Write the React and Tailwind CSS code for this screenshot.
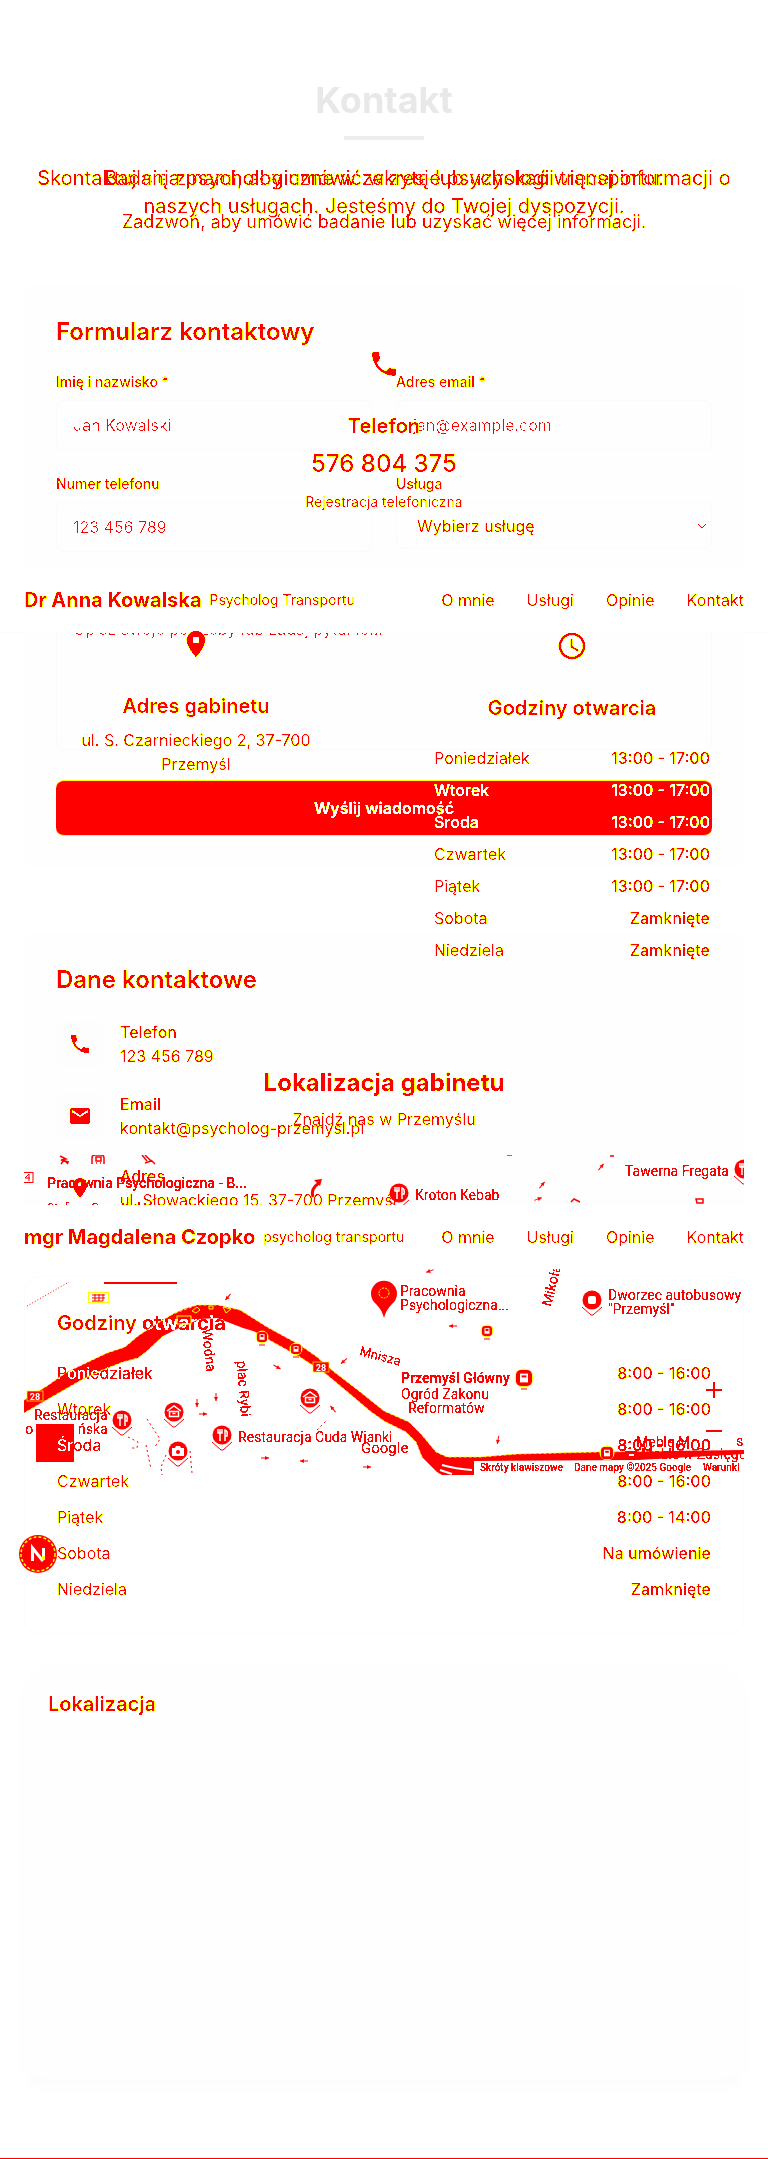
import React from "react";
import { MdPhone, MdEmail, MdLocationOn, MdAccessTime } from "react-icons/md";

function Filters() {
  return (
    <svg width="0" height="0" className="absolute" aria-hidden="true">
      <defs>
        <filter id="ink" colorInterpolationFilters="sRGB">
          <feColorMatrix type="matrix" values="0 0 0 0 1  0 0 0 1 0  0 0 0 0 0  0 0 0 1 0" />
          <feComponentTransfer>
            <feFuncG type="discrete" tableValues="1 1 1 1 1 1 1 0 0 0" />
            <feFuncA type="discrete" tableValues="0 0 1 1 1 1 1 1 1 1" />
          </feComponentTransfer>
        </filter>
        <filter id="light" colorInterpolationFilters="sRGB">
          <feColorMatrix type="matrix" values="0 0 0 0 1  0 0 0 0 1  0 0 0 1 0  0 0 0 1 0" />
          <feComponentTransfer>
            <feFuncB type="discrete" tableValues="0 0 0 0 0 1 1 1 1 1" />
            <feFuncA type="discrete" tableValues="0 0 1 1 1 1 1 1 1 1" />
          </feComponentTransfer>
        </filter>
        <filter id="crisp" colorInterpolationFilters="sRGB">
          <feComponentTransfer>
            <feFuncA type="discrete" tableValues="0 0 0 1 1 1 1 1" />
          </feComponentTransfer>
        </filter>
        <filter id="faint" colorInterpolationFilters="sRGB">
          <feComponentTransfer>
            <feFuncA type="discrete" tableValues="0 0 0.04 0.04 0.04 0.04 0.04 0.04 1 1" />
          </feComponentTransfer>
        </filter>
      </defs>
    </svg>
  );
}

function SiteHeader({ name, role }) {
  return (
    <div className="flex h-16 items-center justify-between bg-white px-6">
      <div className="flex items-center gap-2 [filter:url(#ink)]">
        <span className="text-xl font-bold">{name}</span>
        <span className="text-sm">{role}</span>
      </div>
      <nav className="flex gap-8 [filter:url(#ink)]">
        <a href="#o-mnie">O mnie</a>
        <a href="#uslugi">Usługi</a>
        <a href="#opinie">Opinie</a>
        <a href="#kontakt">Kontakt</a>
      </nav>
    </div>
  );
}

function Field({ id, label, placeholder, type }) {
  return (
    <div>
      <label htmlFor={id} className="mb-2 block text-sm font-medium [filter:url(#ink)]">{label}</label>
      <div className="rounded-lg border border-[#fafafa]">
        <input id={id} type={type} placeholder={placeholder} className="block w-full bg-transparent px-4 py-3 outline-none placeholder:text-[#f00] [filter:url(#faint)]" />
      </div>
    </div>
  );
}

function ContactItem({ icon, title, value }) {
  return (
    <div className="flex gap-4">
      <div className="flex size-12 items-center justify-center rounded-lg bg-[#fdfdfd]">
        <span className="[filter:url(#ink)]">{icon}</span>
      </div>
      <div className="[filter:url(#ink)]">
        <h3 className="font-medium">{title}</h3>
        <p>{value}</p>
      </div>
    </div>
  );
}

const formHours = [
  ["Poniedziałek", "8:00 - 16:00"],
  ["Wtorek", "8:00 - 16:00"],
  ["Środa", "8:00 - 16:00"],
  ["Czwartek", "8:00 - 16:00"],
  ["Piątek", "8:00 - 14:00"],
  ["Sobota", "Na umówienie"],
  ["Niedziela", "Zamknięte"],
];

const officeHours = [
  ["Poniedziałek", "13:00 - 17:00"],
  ["Wtorek", "13:00 - 17:00"],
  ["Środa", "13:00 - 17:00"],
  ["Czwartek", "13:00 - 17:00"],
  ["Piątek", "13:00 - 17:00"],
  ["Sobota", "Zamknięte"],
  ["Niedziela", "Zamknięte"],
];

function FormLayer() {
  return (
    <div className="col-start-1 row-start-1">
      <p className="text-center text-xl leading-7 [filter:url(#ink)]">
        Skontaktuj się z nami, aby umówić wizytę lub uzyskać więcej informacji o naszych usługach. Jesteśmy do Twojej dyspozycji.
      </p>
      <section className="mt-16 rounded-xl bg-[#fefefe] p-8">
        <h2 className="mb-6 text-2xl font-semibold [filter:url(#ink)]">Formularz kontaktowy</h2>
        <form onSubmit={(e) => e.preventDefault()}>
          <div className="grid grid-cols-2 gap-6">
            <Field id="name" type="text" label="Imię i nazwisko *" placeholder="Jan Kowalski" />
            <Field id="email" type="email" label="Adres email *" placeholder="jan@example.com" />
            <Field id="phone" type="tel" label="Numer telefonu" placeholder="123 456 789" />
            <div>
              <label htmlFor="service" className="mb-2 block text-sm font-medium [filter:url(#ink)]">Usługa</label>
              <div className="grid items-center rounded-lg border border-[#fafafa]">
                <select id="service" className="col-start-1 row-start-1 h-[45px] w-full appearance-none bg-transparent px-5 [filter:url(#ink)]">
                  <option>Wybierz usługę</option>
                </select>
                <svg viewBox="0 0 10 6" className="pointer-events-none col-start-1 row-start-1 mr-1 h-[6px] w-[10px] justify-self-end" shapeRendering="crispEdges">
                  <path d="M1 1l4 4 4-4" fill="none" stroke="#f00" />
                </svg>
              </div>
            </div>
          </div>
          <div className="mt-6">
            <label htmlFor="message" className="mb-2 block text-sm font-medium [filter:url(#ink)]">Wiadomość *</label>
            <div className="rounded-lg border border-[#fafafa]">
              <textarea id="message" rows={5} placeholder="Opisz swoje potrzeby lub zadaj pytanie..." className="block w-full resize-none bg-transparent px-4 py-3 outline-none placeholder:text-[#f00] [filter:url(#faint)]" />
            </div>
          </div>
          <button type="submit" className="mt-[30px] h-14 w-full rounded-lg border-y border-[#ff0] bg-[#f00] font-semibold">
            <span className="[filter:url(#light)]">Wyślij wiadomość</span>
          </button>
        </form>
      </section>
      <section className="mt-16 rounded-xl bg-[#fefefe] px-8 pt-8">
        <h2 className="mb-6 text-2xl font-semibold [filter:url(#ink)]">Dane kontaktowe</h2>
        <div className="grid gap-6">
          <ContactItem icon={<MdPhone size={24} />} title="Telefon" value="123 456 789" />
          <ContactItem icon={<MdEmail size={24} />} title="Email" value="kontakt@psycholog-przemysl.pl" />
          <ContactItem icon={<MdLocationOn size={24} />} title="Adres" value="ul. Słowackiego 15, 37-700 Przemyśl" />
        </div>
      </section>
      <section className="mt-16 rounded-2xl border border-[#fcfcfc] p-8">
        <h2 className="mb-6 text-xl leading-7 font-semibold">
          <span className="inline-block [filter:url(#ink)]">Godziny</span>{" "}
          <span className="inline-block [filter:url(#crisp)]">otwarcia</span>
        </h2>
        <ul className="grid gap-3">
          {formHours.map(([day, hours], i) => (
            <li key={day} className="flex justify-between">
              <span className={i === 0 || i === 2 ? "[filter:url(#crisp)]" : "[filter:url(#ink)]"}>{day}</span>
              <span className={i === 2 ? "font-medium [filter:url(#crisp)]" : "font-medium [filter:url(#ink)]"}>{hours}</span>
            </li>
          ))}
        </ul>
      </section>
      <section className="mt-8 rounded-3xl bg-[#fefefe] p-6 shadow-[0_10px_15px_rgba(0,0,0,0.015)]">
        <h2 className="text-xl leading-7 font-semibold [filter:url(#ink)]">Lokalizacja</h2>
        <div className="h-[337px]" />
      </section>
    </div>
  );
}

const arrows = [
  [577, 12, -50], [518, 30, -50], [514, 44, -20], [253, 212, 30], [320, 206, 140],
  [173, 248, 90], [192, 242, 90], [179, 259, 0], [309, 254, -130], [241, 303, 0],
  [280, 306, 180], [343, 312, 0], [429, 171, 180], [474, 285, 100], [204, 142, 130],
  [406, 116, 160],
];

function Place({ x, y, children }) {
  return (
    <g transform={`translate(${x} ${y})`}>
      <circle r="9.5" fill="#f00" />
      <path d="M-10 7L-1 15H1L10 7" fill="none" stroke="#f00" />
      {children}
    </g>
  );
}

function Fork() {
  return (
    <g stroke="#fff" strokeWidth="1.5" fill="none">
      <path d="M-4-6v4h4v-4M-2-6V6M3 6V-5q3 1 2 6h-2" />
    </g>
  );
}

function Bed() {
  return (
    <g stroke="#fff" strokeWidth="1.5" fill="none">
      <path d="M-7-1L0-6L7-1M-4.500-.5v5h9v-5zM-1.500 1.500h3" />
    </g>
  );
}

function Stop({ x, y, r }) {
  return (
    <g transform={`translate(${x} ${y})`}>
      <circle r={r + 1.5} fill="#ff0" />
      <rect x={-r} y={-r} width={2 * r} height={2 * r} rx={r * 0.6} fill="#f00" />
      <rect x={-r * 0.5} y={-r * 0.55} width={r} height={r * 1.1} fill="#fff" />
      <path d={`M${-r * 0.3} ${-r * 0.2}h${r * 0.6}`} stroke="#f00" strokeWidth="2" />
      <path d={`M-3 ${r + 3}h6`} stroke="#f00" />
    </g>
  );
}

function Badge({ x, y, text }) {
  return (
    <g transform={`translate(${x} ${y})`}>
      <rect x="-8" y="-5" width="16" height="10" fill="#f00" stroke="#ff0" strokeWidth="0.7" />
      <text y="3.500" textAnchor="middle" fontSize="9" fontWeight="700" fill="#fff">{text}</text>
    </g>
  );
}

function CityMap() {
  return (
    <div className="grid h-80 overflow-clip">
      <svg viewBox="0 0 720 320" preserveAspectRatio="xMidYMid slice" className="col-start-1 row-start-1 h-80 w-full mix-blend-difference" fill="#0ff">
        <path d="M0 245L23 231 43 217 83 198 101 192 114 181 129 171 149 159 160 154 173 150 194 150 216 155 224 160 243 172 276 190 293 202 309 216 335 236 360 256 385 267 397 279 412 297 423 302 457 302 493 299 573 297 720 295V299L614 305 450 306V320H418L413 317 398 302 392 287 382 277 360 266 346 256 326 239 302 219 276 202 256 191 229 176 219 173 193 163 176 164 157 172 139 181 123 196 114 203 99 207 76 216 59 224 0 258Z" />
        <rect x="12" y="269" width="38" height="38" />
      </svg>
      <svg viewBox="0 0 720 320" preserveAspectRatio="xMidYMid slice" className="relative col-start-1 row-start-1 h-80 w-full font-[Roboto]" fill="#f00" fontSize="14" role="img" aria-label="Mapa dojazdu">
        <path d="M0 245L23 231 43 217 83 198 101 192 114 181 129 171 149 159 173 150 194 150 216 155 224 160 243 172 276 190 293 202 309 216 335 236 360 256 385 267 397 279 412 297 423 302 457 302 493 299 573 297 640 296" fill="none" stroke="#ff0" strokeWidth="1" strokeDasharray="3 2" />
        <path d="M398 302L392 287 382 277 360 266 346 256 326 239 302 219 276 202 256 191 229 176M139 181L123 196 114 203 99 207 76 216 59 224 0 258" fill="none" stroke="#ff0" strokeWidth="1" strokeDasharray="3 2" />
        <path d="M80 128H153" stroke="#f00" strokeWidth="2" />
        <path d="M3 151L45 127" stroke="#f00" strokeDasharray="1 2" />
        <path d="M123 264L136 284 131 292M122 290l5 24M104 282l10 5 -1 6h-7M142 300l-5 12 1 8M166 296l2 22M293 275l9-9" fill="none" stroke="#f00" strokeDasharray="2 3" />
        <path d="M418 310q14 4 30 5M416 315l12 4" stroke="#fff" strokeWidth="2" fill="none" />
        <path d="M168 156l5-4 3 3-4 3zM185 151h4v3h-4zM199 152l8 2-5 4z" fill="none" stroke="#ff0" />
        <rect x="64.500" y="137.500" width="20" height="10" fill="#fff" stroke="#ff0" />
        <path d="M68 140h13M68 143h13M68 146h11M71 139v7M75 139v7M79 139v7" stroke="#f00" />
        <rect x="-4" y="17.500" width="13" height="10" fill="none" stroke="#f00" />
        <path d="M1 23h5M5 19v7M1 23l4-4" stroke="#f00" />
        <path d="M36 1l6 3-5 1 8 2M37 9l3-4 4 4M118 0l5 6M121 0l6 6-6 2M127 5l4 4" fill="none" stroke="#f00" strokeWidth="1.5" />
        <path d="M68 9V3q0-3 3-3h6q3 0 3 3v6M72 2v4h5V2zM72 8h1M76 8h1" fill="none" stroke="#f00" strokeWidth="1.5" />
        <path d="M289 42q-3-8 6-14" fill="none" stroke="#f00" strokeWidth="3" />
        <path d="M290 25l8-1-2 7z" />
        <path d="M547 47l3-3 6 3M672 44h7v4h-6zM483 0h5M586 1h4" fill="none" stroke="#f00" strokeWidth="1.500" />
        {arrows.map(([x, y, a]) => (
          <g key={`${x}-${y}`} transform={`translate(${x} ${y}) rotate(${a})`}>
            <path d="M-4 0H4" stroke="#f00" />
            <path d="M0-2L4 0 0 2z" />
          </g>
        ))}
        <g className="[filter:url(#crisp)]">
          <text x="23" y="33" fontWeight="500">Pracownia Psychologiczna - B...</text>
          <text x="23" y="57" fontSize="12">Stefana Czarnieckiego</text>
          <text x="391" y="45">Kroton Kebab</text>
          <text x="601" y="21">Tawerna Fregata</text>
          <text x="376" y="141">Pracownia</text>
          <text x="376" y="155">Psychologiczna...</text>
          <text x="584" y="145">Dworzec autobusowy</text>
          <text x="584" y="159">"Przemyśl"</text>
          <text x="377" y="228" fontWeight="600">Przemyśl Główny</text>
          <text x="377" y="244">Ogród Zakonu</text>
          <text x="384" y="258">Reformatów</text>
          <text x="10" y="265">Restauracja</text>
          <text x="-8" y="279">Do</text>
          <text x="54" y="279">ńska</text>
          <text x="214" y="287">Restauracja Cuda Wianki</text>
          <text x="337" y="298" fontSize="15">Google</text>
          <text x="612" y="292">Meble M</text>
          <text x="712" y="291">s</text>
          <text transform="translate(178 174) rotate(84)">Wodna</text>
          <text transform="translate(213 206) rotate(86)">plac Rybi</text>
          <text transform="translate(527 152) rotate(-76)">Mikoła</text>
          <text transform="translate(335 200) rotate(15)" fontSize="13">Mnisza</text>
        </g>
        <Badge x={11} y={241} text="28" />
        <Badge x={297} y={212} text="28" />
        <rect x="153" y="161" width="14" height="8" fill="none" stroke="#ff0" />
        <Stop x={238} y={182} r={5} />
        <Stop x={272} y={194} r={5} />
        <Stop x={463} y={176} r={5} />
        <Stop x={500} y={223} r={8} />
        <Stop x={583} y={298} r={6} />
        <Place x={98} y={265}><Fork /></Place>
        <Place x={198} y={280}><Fork /></Place>
        <Place x={375} y={38}><Fork /></Place>
        <Place x={720} y={14}><Fork /></Place>
        <Place x={150} y={257}><Bed /></Place>
        <Place x={286} y={243}><Bed /></Place>
        <Place x={154} y={296}>
          <path d="M-6-3h3l1-2h4l1 2h3v8H-6z" fill="#fff" />
          <circle cy="1" r="2" fill="#f00" />
        </Place>
        <Place x={568} y={145}><rect x="-4" y="-4" width="8" height="8" rx="2" fill="#fff" /></Place>
        <path d="M360 163q-2-8-8-14a13 13 0 1 1 16 0q-6 6-8 14z" />
        <circle cx="360" cy="138" r="5" fill="none" stroke="#ff0" strokeDasharray="2 1" />
        <path d="M682 235h16M690 227v16M682 276h16" stroke="#f00" strokeWidth="2" />
        <rect x="601" y="296" width="12" height="8" fill="#f00" />
        <path d="M605 300h5" stroke="#fff" strokeWidth="2" />
        <rect x="450" y="306" width="270" height="14" fill="#fff" />
        <g className="[filter:url(#crisp)]">
          <text x="617" y="304">Meble w Zasięgu</text>
          <g fontSize="10" fontWeight="500">
            <text x="456" y="316">Skróty klawiszowe</text>
            <text x="550" y="316">Dane mapy ©2025 Google</text>
            <text x="679" y="316">Warunki</text>
          </g>
        </g>
      </svg>
    </div>
  );
}

function OfficeLayer() {
  return (
    <div className="col-start-1 row-start-1 text-center">
      <p className="text-xl leading-7 [filter:url(#ink)]">Badania psychologiczne w zakresie psychologii transportu.</p>
      <p className="mt-4 text-lg leading-7 [filter:url(#ink)]">Zadzwoń, aby umówić badanie lub uzyskać więcej informacji.</p>
      <div className="mt-24 flex flex-col items-center pb-8">
        <div className="flex h-16 items-center [filter:url(#ink)]"><MdPhone size={32} /></div>
        <div className="mt-4 flex flex-col items-center [filter:url(#ink)]">
          <h3 className="text-xl leading-7 font-semibold">Telefon</h3>
          <a href="tel:576804375" className="mt-2 text-2xl font-medium">576 804 375</a>
          <p className="mt-3 text-sm">Rejestracja telefoniczna</p>
        </div>
      </div>
      <div className="mt-8 grid grid-cols-2 gap-8">
        <div className="px-8 pt-9">
          <div className="relative z-20 flex h-16 items-center justify-center [filter:url(#ink)]"><MdLocationOn size={32} /></div>
          <h3 className="mt-4 text-xl leading-7 font-semibold [filter:url(#ink)]">Adres gabinetu</h3>
          <p className="mt-2 [filter:url(#ink)]">ul. S. Czarnieckiego 2, 37-700 Przemyśl</p>
        </div>
        <div className="px-[34px] pt-[38px]">
          <div className="flex h-16 items-center justify-center [filter:url(#ink)]"><MdAccessTime size={32} /></div>
          <h3 className="mt-4 text-xl leading-7 font-semibold [filter:url(#ink)]">Godziny otwarcia</h3>
          <ul className="mt-6 grid gap-2">
            {officeHours.map(([day, hours], i) => (
              <li key={day} className={i === 1 || i === 2 ? "flex justify-between font-medium [filter:url(#light)]" : "flex justify-between [filter:url(#ink)]"}>
                <span>{day}</span>
                <span className="font-medium">{hours}</span>
              </li>
            ))}
          </ul>
        </div>
      </div>
      <h2 className="mt-[105px] text-2xl font-bold [filter:url(#ink)]">Lokalizacja gabinetu</h2>
      <p className="mt-2 mb-6 [filter:url(#ink)]">Znajdź nas w Przemyślu</p>
      <CityMap />
    </div>
  );
}

export default function App() {
  return (
    <main className="relative overflow-clip border-b border-[#f00] bg-white px-6 pt-20 pb-[79px] font-[Inter,sans-serif] text-base text-[#f00]">
      <Filters />
      <h1 className="text-center text-4xl font-bold text-[#e8e8e8]">Kontakt</h1>
      <div className="mx-auto mt-4 h-1 w-20 bg-[#ececec]" />
      <div className="mt-6 grid grid-cols-1">
        <FormLayer />
        <OfficeLayer />
      </div>
      <header className="absolute inset-x-0 top-[568px] z-10 border-b border-[#fcfcfc]">
        <SiteHeader name="Dr Anna Kowalska" role="Psycholog Transportu" />
      </header>
      <header className="absolute inset-x-0 top-[1205px] z-10">
        <SiteHeader name="mgr Magdalena Czopko" role="psycholog transportu" />
      </header>
      <button type="button" aria-label="Narzędzia" className="absolute top-[1535px] left-[19px] z-10 size-[38px]">
        <svg viewBox="0 0 38 38" className="size-full">
          <circle cx="19" cy="19" r="19" fill="#f00" />
          <circle cx="19" cy="19" r="17" fill="none" stroke="#ff0" strokeWidth="1.500" strokeDasharray="3 2" />
          <path d="M13.500 26V13L24 26M24.500 13v8" fill="none" stroke="#fff" strokeWidth="3" />
          <path d="M24.500 21v4" stroke="#ff0" strokeWidth="3" />
        </svg>
      </button>
    </main>
  );
}
